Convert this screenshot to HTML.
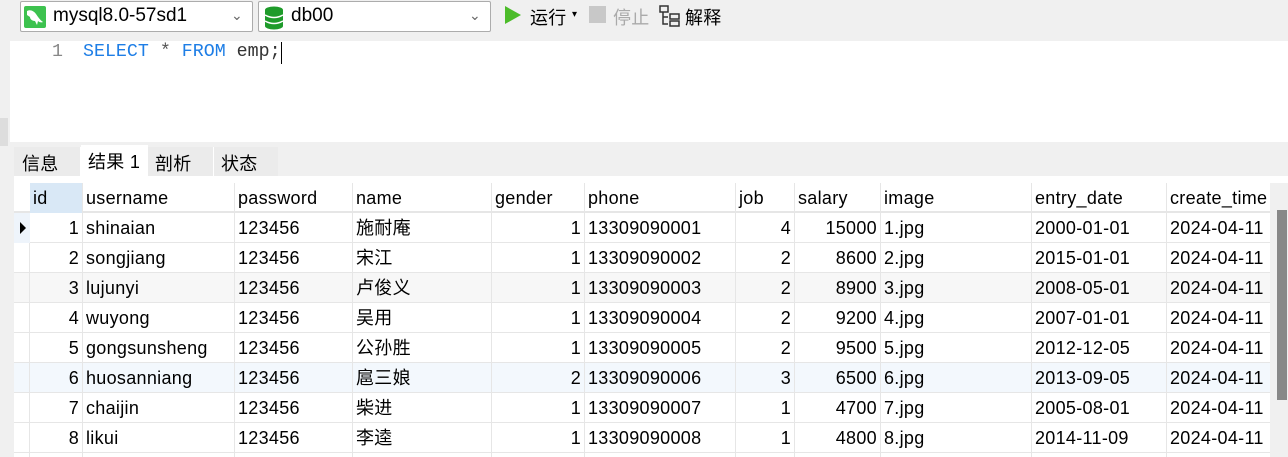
<!DOCTYPE html>
<html><head><meta charset="utf-8"><style>
*{margin:0;padding:0;box-sizing:border-box}
html,body{width:1288px;height:457px;overflow:hidden}
body{background:#f0f0f0;font-family:"Liberation Sans","Noto Sans CJK SC",sans-serif;font-size:18px;letter-spacing:0.3px;color:#000;position:relative}
.a{position:absolute}
.sel{position:absolute;top:1px;height:31px;background:#fff;border:1px solid #acacac;border-radius:2px}
.grid{position:absolute;left:14px;top:183px;width:1256px;height:274px;background:#fff;overflow:hidden}
.row{position:absolute;left:0;width:1256px;height:30px;border-bottom:1px solid #e6e6e6}
.c{position:absolute;top:0;height:30px;line-height:30px;padding:0 3px;white-space:nowrap;border-right:1px solid #e6e6e6;overflow:hidden}
.r{text-align:right}
</style></head><body>
<div class="sel" style="left:20px;width:233px">
 <div class="a" style="left:3px;top:4px;width:22px;height:22px;background:#3dc24f;border-radius:2px">
  <svg width="22" height="22" viewBox="0 0 22 22"><path d="M3 5c3-2 7 0 9 3 2 3 4 6 7 8-2 1-4 0-5-1l-1 4-2-4c-3 0-5-2-5-4L3 9z" fill="#fff"/></svg>
 </div>
 <div class="a" style="left:32px;top:3px;font-size:19px;letter-spacing:0">mysql8.0-57sd1</div>
 <div class="a" style="left:210px;top:5px;font-size:14px;color:#666">&#8964;</div>
</div>
<div class="sel" style="left:258px;width:233px">
 <svg class="a" style="left:5px;top:4px" width="20" height="24" viewBox="0 0 20 24"><ellipse cx="10" cy="4" rx="9" ry="3.5" fill="#1e9b2a"/><rect x="1" y="4" width="18" height="16" fill="#1e9b2a"/><ellipse cx="10" cy="20" rx="9" ry="3.5" fill="#1e9b2a"/><path d="M1 9q9 5 18 0M1 15q9 5 18 0" stroke="#fff" stroke-width="1.5" fill="none"/></svg>
 <div class="a" style="left:32px;top:3px;font-size:19px;letter-spacing:0">db00</div>
 <div class="a" style="left:210px;top:5px;font-size:14px;color:#666">&#8964;</div>
</div>
<svg class="a" style="left:505px;top:6px" width="16" height="18"><path d="M0 0L16 9L0 18z" fill="#4cbc2a"/></svg>
<div class="a" style="left:530px;top:4px;font-size:18px">运行</div>
<div class="a" style="left:572px;top:9px;font-size:10px">▾</div>
<div class="a" style="left:589px;top:6px;width:17px;height:17px;background:#c8c8c8"></div>
<div class="a" style="left:613px;top:4px;font-size:18px;color:#aaa">停止</div>
<svg class="a" style="left:659px;top:5px" width="24" height="22"><rect x="1" y="1" width="8" height="6" fill="none" stroke="#333" stroke-width="1.5"/><path d="M4 7v12h5M4 12h5" stroke="#333" stroke-width="1.5" fill="none"/><rect x="11" y="9" width="9" height="5" fill="none" stroke="#333" stroke-width="1.5"/><rect x="11" y="16" width="9" height="5" fill="none" stroke="#333" stroke-width="1.5"/></svg>
<div class="a" style="left:685px;top:4px;font-size:18px">解释</div>
<div class="a" style="left:10px;top:41px;width:1278px;height:101px;background:#fff"></div>
<div class="a" style="left:0;top:118px;width:8px;height:28px;background:#ddd"></div>
<div class="a" style="left:52px;top:42px;font-family:'Liberation Mono',monospace;font-size:18.3px;letter-spacing:0;color:#888">1</div>
<div class="a" style="left:83px;top:42px;font-family:'Liberation Mono',monospace;font-size:18.3px;letter-spacing:0;white-space:pre"><span style="color:#1e7ee6">SELECT</span> <span style="color:#555">*</span> <span style="color:#1e7ee6">FROM</span> <span style="color:#333">emp;</span></div>
<div class="a" style="left:281px;top:42px;width:1px;height:22px;background:#000"></div>
<div class="a" style="left:14px;top:147px;width:67px;height:30px;background:#ebebeb;border-right:1px solid #fff"></div>
<div class="a" style="left:22px;top:150px">信息</div>
<div class="a" style="left:81px;top:145px;width:67px;height:32px;background:#fff"></div>
<div class="a" style="left:88px;top:148px">结果 1</div>
<div class="a" style="left:148px;top:147px;width:66px;height:30px;background:#ebebeb;border-right:1px solid #fff"></div>
<div class="a" style="left:155px;top:150px">剖析</div>
<div class="a" style="left:214px;top:147px;width:64px;height:30px;background:#ebebeb"></div>
<div class="a" style="left:221px;top:150px">状态</div>
<div class="a" style="left:14px;top:176px;width:1274px;height:7px;background:#fff"></div>
<div class="grid">
 <div class="row" style="top:0;border-bottom:2px solid #e6e6e6">
  <div class="c" style="left:16px;width:53px;background:#d9e8f6">id</div>
  <div class="c" style="left:69px;width:152px">username</div>
  <div class="c" style="left:221px;width:118px">password</div>
  <div class="c" style="left:339px;width:139px">name</div>
  <div class="c" style="left:478px;width:93px">gender</div>
  <div class="c" style="left:571px;width:151px">phone</div>
  <div class="c" style="left:722px;width:59px">job</div>
  <div class="c" style="left:781px;width:86px">salary</div>
  <div class="c" style="left:867px;width:151px">image</div>
  <div class="c" style="left:1018px;width:135px">entry_date</div>
  <div class="c" style="left:1153px;width:103px;border:0">create_time</div>
 </div>
 <div id="rows"></div>
</div>
<div class="a" style="left:14px;top:213px;width:16px;height:30px;background:#eef4fb"></div>
<div class="a" style="left:20px;top:222px;width:0;height:0;border-top:6px solid transparent;border-bottom:6px solid transparent;border-left:6px solid #000"></div>
<div class="a" style="left:1270px;top:183px;width:18px;height:274px;background:#f0f0f0"></div>
<div class="a" style="left:1277px;top:210px;width:10px;height:190px;background:#888"></div>
<script>
var d=[[1,'shinaian','施耐庵',1,'13309090001',4,15000,'2000-01-01'],[2,'songjiang','宋江',1,'13309090002',2,8600,'2015-01-01'],[3,'lujunyi','卢俊义',1,'13309090003',2,8900,'2008-05-01'],[4,'wuyong','吴用',1,'13309090004',2,9200,'2007-01-01'],[5,'gongsunsheng','公孙胜',1,'13309090005',2,9500,'2012-12-05'],[6,'huosanniang','扈三娘',2,'13309090006',3,6500,'2013-09-05'],[7,'chaijin','柴进',1,'13309090007',1,4700,'2005-08-01'],[8,'likui','李逵',1,'13309090008',1,4800,'2014-11-09'],[9,'','','','','','','']];
var h='';d.forEach(function(r,i){var bg=i==2?'#f7f7f7':i==5?'#f3f8fd':'#fff';
h+='<div class="row" style="top:'+(30+i*30)+'px;background:'+bg+'">'+
'<div class="c" style="left:0;width:16px"></div>'+
'<div class="c r" style="left:16px;width:53px">'+r[0]+'</div>'+
'<div class="c" style="left:69px;width:152px">'+r[1]+'</div>'+
'<div class="c" style="left:221px;width:118px">'+(r[1]?'123456':'')+'</div>'+
'<div class="c" style="left:339px;width:139px">'+r[2]+'</div>'+
'<div class="c r" style="left:478px;width:93px">'+r[3]+'</div>'+
'<div class="c" style="left:571px;width:151px">'+r[4]+'</div>'+
'<div class="c r" style="left:722px;width:59px">'+r[5]+'</div>'+
'<div class="c r" style="left:781px;width:86px">'+r[6]+'</div>'+
'<div class="c" style="left:867px;width:151px">'+(r[1]?r[0]+'.jpg':'')+'</div>'+
'<div class="c" style="left:1018px;width:135px">'+r[7]+'</div>'+
'<div class="c" style="left:1153px;width:103px;border:0">'+(r[1]?'2024-04-11':'')+'</div></div>';});
document.getElementById('rows').outerHTML=h;
</script>
</body></html>
